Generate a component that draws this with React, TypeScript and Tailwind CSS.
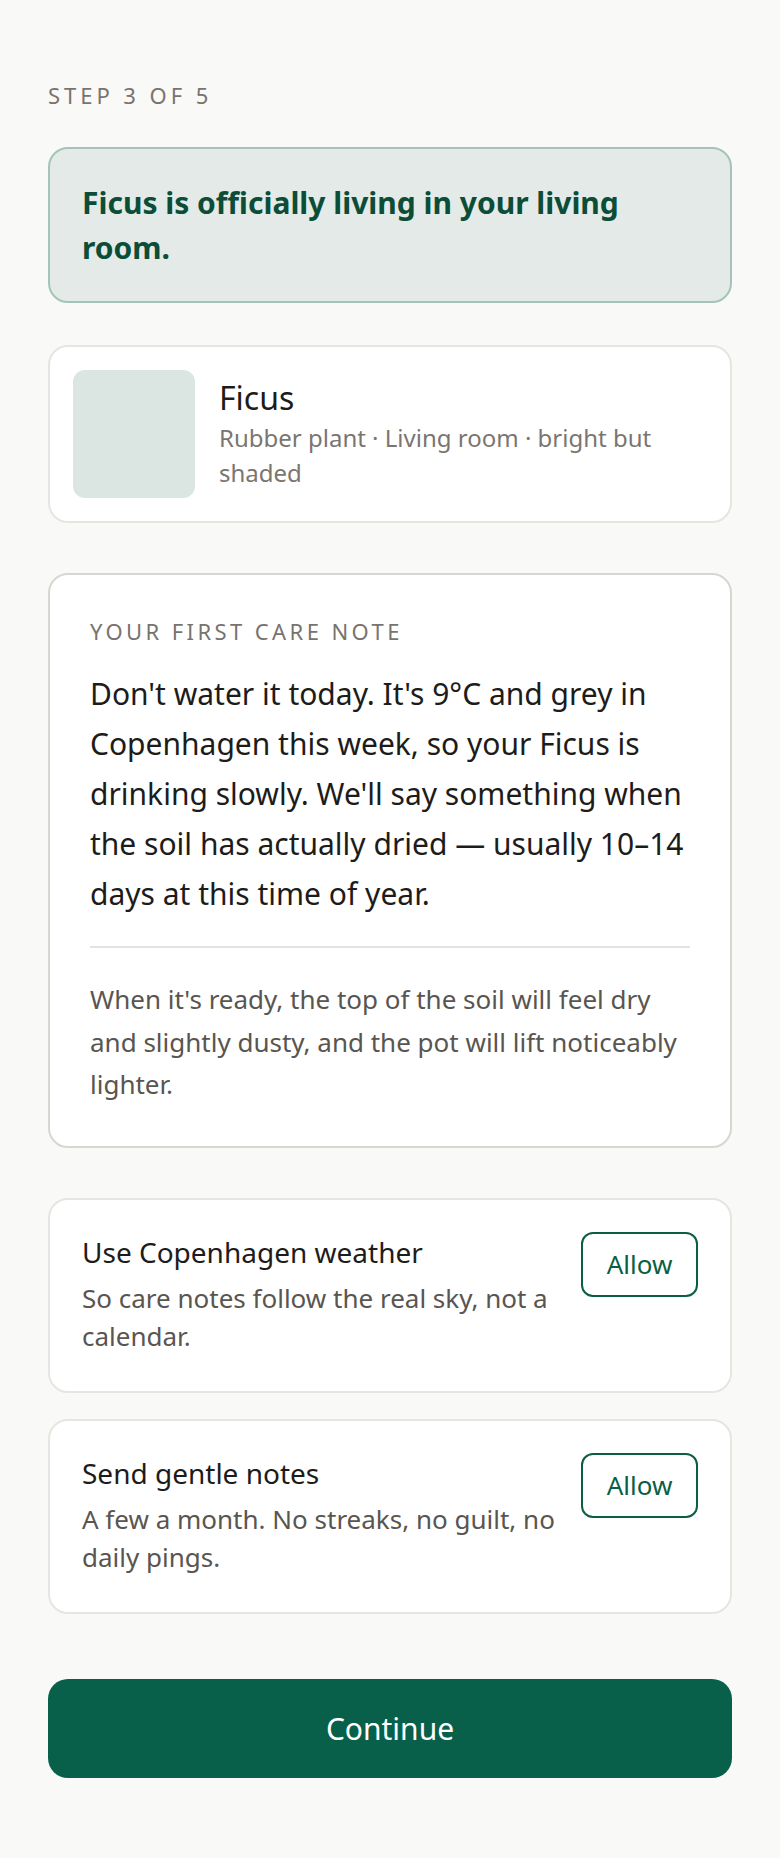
import React from 'react';

const font = { fontFamily: '"Noto Sans", "Open Sans", sans-serif' };

interface PermissionProps {
  title: string;
  desc: string;
}

function PermissionCard({ title, desc }: PermissionProps) {
  return (
    <div className="flex items-start gap-6 rounded-[20px] border-2 border-[#e7e5e2] bg-white px-8 pt-8 pb-[32px] min-h-[195px]">
      <div className="flex-1">
        <p className="text-[28px] leading-[40px] text-[#1d1c1a]">{title}</p>
        <p className="mt-[7px] text-[26px] leading-[38px] text-[#595550]">{desc}</p>
      </div>
      <button className="flex h-[65px] w-[117px] shrink-0 items-center justify-center rounded-[12px] border-2 border-[#0b5e45] text-[26px] text-[#0b5e45]">
        Allow
      </button>
    </div>
  );
}

export default function App() {
  return (
    <div className="min-h-screen bg-[#f9f9f7] px-12 pt-[79px] pb-[81px]" style={font}>
      <p className="text-[22px] leading-[33px] tracking-[0.18em] text-[#78736e]">STEP 3 OF 5</p>

      <div className="mt-[35px] rounded-[20px] border-2 border-[#a3c5b8] bg-[#e3eae7] px-8 py-[31px]">
        <h1 className="text-[30px] font-bold leading-[45px] text-[#0b4d37]">
          Ficus is officially living in your living room.
        </h1>
      </div>

      <div className="mt-[42px] flex items-center gap-6 rounded-[20px] border-2 border-[#e7e5e2] bg-white p-[23px]">
        <div className="h-[128px] w-[122px] shrink-0 rounded-[12px] bg-[#dbe5e1]" />
        <div>
          <p className="text-[32px] leading-[40px] text-[#1d1c1a]">Ficus</p>
          <p className="mt-[2px] text-[24px] leading-[35px] text-[#7b7570]">
            Rubber plant · Living room · bright but shaded
          </p>
        </div>
      </div>

      <div className="mt-[50px] rounded-[20px] border-2 border-[#d9d6d2] bg-white p-10">
        <p className="text-[22px] leading-[33px] tracking-[0.155em] text-[#78736e]">YOUR FIRST CARE NOTE</p>
        <p className="mt-[21px] text-[30px] leading-[50px] text-[#1d1c1a]">
          Don't water it today. It's 9°C and grey in Copenhagen this week, so your Ficus is drinking slowly. We'll say
          something when the soil has actually dried — usually 10–14 days at this time of year.
        </p>
        <div className="mt-[27px] border-t-2 border-[#e5e3e0] pt-[30px]">
          <p className="text-[26px] leading-[42.5px] text-[#595550]">
            When it's ready, the top of the soil will feel dry and slightly dusty, and the pot will lift noticeably
            lighter.
          </p>
        </div>
      </div>

      <div className="mt-[50px] flex flex-col gap-[26px]">
        <PermissionCard title="Use Copenhagen weather" desc="So care notes follow the real sky, not a calendar." />
        <PermissionCard title="Send gentle notes" desc="A few a month. No streaks, no guilt, no daily pings." />
      </div>

      <button className="mt-[65px] flex h-[99px] w-full items-center justify-center rounded-[20px] bg-[#08604a] text-[30px] text-white">
        Continue
      </button>
    </div>
  );
}
